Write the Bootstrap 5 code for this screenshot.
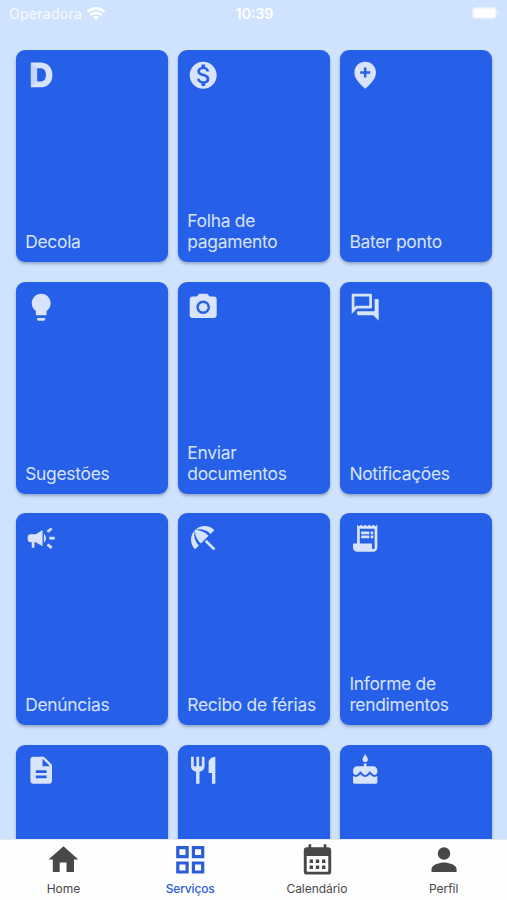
<!DOCTYPE html>
<html lang="pt-BR">
<head>
<meta charset="utf-8">
<meta name="viewport" content="width=device-width, initial-scale=1">
<title>Serviços</title>
<link rel="stylesheet" href="https://cdn.jsdelivr.net/npm/bootstrap@5.3.0/dist/css/bootstrap.min.css">
<style>
body{background:#cfe3fe;font-family:Inter,"Liberation Sans",sans-serif}
.status{height:50px;padding:4px 7px 0 9px;color:#fff;font-size:14px;line-height:20px;flex:none}
.status>div{flex:1 1 0}
.status svg{display:block}
.carrier{letter-spacing:.28px;opacity:.85}
.services{display:grid;grid-template-columns:repeat(3,1fr);grid-auto-rows:212px;gap:19.5px 9.8px;padding:0 15px 0 15.5px;flex:1 1 0;min-height:0;overflow:hidden}
.tile{background:#2660e9;color:#d8e3fd;border:0;border-radius:9px;box-shadow:0 2px 3px rgba(50,70,110,.38);padding:9.3px 9.7px 9px;font-size:17.4px;line-height:20.8px;font-weight:375;letter-spacing:-.27px;text-decoration:none}
.tile svg{width:32.4px;height:32.4px;fill:#d8e3fd;display:block;margin-left:-.4px}
.tabs{height:61px;background:#fefefe;flex:none;border-top:1px solid #e3e7f0}
.tabs a{flex:1 1 0;color:#484848;font-size:12px;line-height:14px;text-decoration:none;padding-top:3px;letter-spacing:-.05px}
.tabs a svg{width:34px;height:34px;fill:#484848;margin-bottom:5px}
.tabs a.current{color:#2b5cd9;font-weight:500;letter-spacing:-.15px}
.tabs a.current svg{fill:none;stroke:#2b5cd9;stroke-width:3.2}
</style>
<script src="https://cdn.jsdelivr.net/npm/bootstrap@5.3.0/dist/js/bootstrap.bundle.min.js"></script>
</head>
<body class="vh-100 d-flex flex-column overflow-hidden">
<header class="status d-flex align-items-start">
  <div class="d-flex align-items-center gap-1"><span class="carrier">Operadora</span>
    <svg width="20" height="16" viewBox="0 0 20 16" fill="none" stroke="#fff" stroke-width="2.6"><path d="M1.6 5.8a12 12 0 0 1 16.8 0M4.6 9a7.8 7.8 0 0 1 10.8 0"/><path d="M10 14.3l-3-3a4.3 4.3 0 0 1 6 0z" fill="#fff" stroke="none"/></svg></div>
  <div class="text-center fw-semibold">10:39</div>
  <div class="d-flex justify-content-end"><svg width="29" height="18" viewBox="0 0 29 18"><rect x="1" y="3" width="25" height="12" rx="4" fill="#fff" opacity=".45"/><rect x="2.5" y="4.5" width="22" height="9" rx="2.5" fill="#fff"/><path d="M27 7v4q1.5-.5 1.5-2T27 7" fill="#fff" opacity=".5"/></svg></div>
</header>
<main class="services">
  <a class="tile d-flex flex-column justify-content-between"><svg viewBox="0 0 24 24"><path fill-rule="evenodd" d="M4.300 2.600h7c5.500 0 9 3.600 9 9.200s-3.500 9.200-9 9.200h-7zM9 6.900v9.800h2.500c2.500 0 4-1.800 4-4.900s-1.500-4.900-4-4.900z"/><path opacity=".1" fill="#2660e9" d="M4.300 2.600L9 6.900v9.800L4.300 21z"/></svg><span>Decola</span></a>
  <a class="tile d-flex flex-column justify-content-between"><svg viewBox="0 0 24 24"><path d="M12 2C6.480 2 2 6.480 2 12s4.480 10 10 10 10-4.480 10-10S17.520 2 12 2zm1.410 16.090V20h-2.670v-1.930c-1.710-.36-3.160-1.460-3.270-3.400h1.960c.1 1.050.82 1.870 2.650 1.870 1.960 0 2.400-.98 2.400-1.590 0-.83-.44-1.610-2.670-2.140-2.480-.6-4.180-1.620-4.180-3.670 0-1.720 1.390-2.840 3.110-3.210V4h2.670v1.950c1.860.45 2.790 1.860 2.850 3.390H14.300c-.05-1.110-.64-1.870-2.220-1.870-1.500 0-2.400.68-2.400 1.640 0 .84.65 1.390 2.670 1.910s4.180 1.390 4.180 3.910c-.01 1.830-1.380 2.830-3.120 3.160z"/></svg><span>Folha de pagamento</span></a>
  <a class="tile d-flex flex-column justify-content-between"><svg viewBox="0 0 24 24"><path fill-rule="evenodd" d="M12 2C7.500 2 4 5.500 4 10c0 5 5 9.400 8 12 3-2.600 8-7 8-12 0-4.500-3.500-8-8-8zm-.9 4.300h1.800v2.800h2.800v1.800h-2.800v2.800h-1.800v-2.800H8.300V9.100h2.800z"/></svg><span>Bater ponto</span></a>
  <a class="tile d-flex flex-column justify-content-between"><svg viewBox="0 0 24 24"><path d="M9 21c0 .55.45 1 1 1h4c.55 0 1-.45 1-1v-1H9v1zm3-19C8.140 2 5 5.140 5 9c0 2.380 1.190 4.470 3 5.740V17c0 .55.45 1 1 1h6c.55 0 1-.45 1-1v-2.260c1.810-1.270 3-3.360 3-5.740 0-3.860-3.140-7-7-7z"/></svg><span>Sugestões</span></a>
  <a class="tile d-flex flex-column justify-content-between"><svg viewBox="0 0 24 24"><path d="M9 2L7.170 4H4c-1.100 0-2 .9-2 2v12c0 1.100.9 2 2 2h16c1.100 0 2-.9 2-2V6c0-1.100-.9-2-2-2h-3.170L15 2H9zm3 15c-2.760 0-5-2.240-5-5s2.240-5 5-5 5 2.240 5 5-2.240 5-5 5z"/><circle cx="12" cy="12" r="3.200"/></svg><span>Enviar documentos</span></a>
  <a class="tile d-flex flex-column justify-content-between"><svg viewBox="0 0 24 24"><path d="M15 4v7H5.170L4 12.170V4h11m1-2H3c-.55 0-1 .45-1 1v14l4-4h10c.55 0 1-.45 1-1V3c0-.55-.45-1-1-1zm5 4h-2v9H6v2c0 .55.45 1 1 1h11l4 4V7c0-.55-.45-1-1-1z"/></svg><span>Notificações</span></a>
  <a class="tile d-flex flex-column justify-content-between"><svg viewBox="0 0 24 24"><path d="M18 11v2h4v-2h-4zm-2 6.610c.96.71 2.210 1.650 3.200 2.390.4-.53.8-1.070 1.200-1.600-.99-.74-2.240-1.680-3.200-2.400-.4.54-.8 1.080-1.200 1.610zM20.400 5.600c-.4-.53-.8-1.070-1.200-1.600-.99.74-2.240 1.680-3.200 2.400.4.53.8 1.070 1.200 1.600.96-.72 2.210-1.650 3.200-2.400zM4 9c-1.100 0-2 .9-2 2v2c0 1.100.9 2 2 2h1v4h2v-4h1l5 3V6L8 9H4zm11.500 3c0-1.330-.58-2.530-1.500-3.350v6.690c.92-.81 1.500-2.010 1.500-3.340z"/></svg><span>Denúncias</span></a>
  <a class="tile d-flex flex-column justify-content-between"><svg viewBox="0 0 24 24"><path d="M13.127 14.560l1.430-1.430 6.440 6.443L19.570 21zm4.293-5.730l2.860-2.860c-3.950-3.950-10.350-3.960-14.300-.02 3.930-1.300 8.310-.25 11.440 2.880zM5.950 5.980c-3.940 3.950-3.930 10.350.02 14.300l2.860-2.860C5.700 14.290 4.650 9.910 5.950 5.980zm.02-.02l-.01.01c-.38 3.010 1.170 6.880 4.300 10.020l5.730-5.730c-3.130-3.130-7.010-4.680-10.020-4.300z"/></svg><span class="text-nowrap">Recibo de férias</span></a>
  <a class="tile d-flex flex-column justify-content-between"><svg viewBox="0 0 24 24"><path d="M19.500 3.200L18 2l-1.500 1.200L15 2l-1.500 1.200L12 2l-1.500 1.200L9 2 7.500 3.200 6 2v14H3v3c0 1.660 1.340 3 3 3h12c1.660 0 3-1.340 3-3V2l-1.500 1.200zM19 19c0 .55-.45 1-1 1s-1-.45-1-1v-3H8V5h11v14z"/><path d="M9 7h6v2H9zm7 0h2v2h-2zm-7 3h6v2H9zm7 0h2v2h-2z"/></svg><span>Informe de rendimentos</span></a>
  <a class="tile d-flex flex-column justify-content-between" aria-label="Documento"><svg viewBox="0 0 24 24"><path d="M14 2H6c-1.100 0-1.990.9-1.990 2L4 20c0 1.100.89 2 1.990 2H18c1.100 0 2-.9 2-2V8l-6-6zm2 16H8v-2h8v2zm0-4H8v-2h8v2zm-3-5V3.500L18.500 9H13z"/></svg></a>
  <a class="tile d-flex flex-column justify-content-between" aria-label="Restaurante"><svg viewBox="0 0 24 24"><path d="M11 9H9V2H7v7H5V2H3v7c0 2.120 1.660 3.840 3.750 3.970V22h2.500v-9.030C11.340 12.840 13 11.120 13 9V2h-2v7zm5-3v8h2.500v8H21V2c-2.760 0-5 2.240-5 4z"/></svg></a>
  <a class="tile d-flex flex-column justify-content-between" aria-label="Aniversário"><svg viewBox="0 0 24 24"><path d="M12 6c1.110 0 2-.9 2-2 0-.38-.1-.73-.29-1.030L12 0l-1.710 2.970c-.19.3-.29.65-.29 1.030 0 1.100.9 2 2 2zm4.600 9.990l-1.070-1.070-1.080 1.070c-1.300 1.300-3.580 1.310-4.890 0l-1.070-1.070-1.090 1.070C6.750 16.640 5.880 17 4.960 17c-.73 0-1.400-.23-1.960-.61V21c0 .55.45 1 1 1h16c.55 0 1-.45 1-1v-4.610c-.56.38-1.230.61-1.960.61-.92 0-1.790-.36-2.440-1.010zM18 9h-5V7h-2v2H6c-1.660 0-3 1.340-3 3v1.540c0 1.080.88 1.960 1.960 1.960.52 0 1.020-.2 1.380-.57l2.140-2.130 2.130 2.130c.74.74 2.030.74 2.770 0l2.140-2.130 2.130 2.130c.37.37.86.57 1.380.57 1.080 0 1.960-.88 1.960-1.960V12C21 10.340 19.660 9 18 9z"/></svg></a>
</main>
<nav class="tabs d-flex">
  <a class="d-flex flex-column align-items-center"><svg viewBox="0 0 34 34"><path d="M17.500 3.300L32.300 16.500H28V29h-7.500v-9.500h-6.800V29H6.800V16.500H2.500z"/></svg>Home</a>
  <a class="current d-flex flex-column align-items-center"><svg viewBox="0 0 34 34"><path d="M4.800 4.600h9.300v9H4.800zM20.400 4.600h9.300v9h-9.300zM4.800 20h9.300v9H4.800zM20.400 20h9.300v9h-9.300z"/></svg>Serviços</a>
  <a class="d-flex flex-column align-items-center"><svg viewBox="0 0 34 34"><path fill-rule="evenodd" d="M8.500 1.200h2.700v3h12.500v-3h2.700v3h1.600a3.200 3.200 0 0 1 3.200 3.200v21a3.200 3.200 0 0 1-3.200 3.200H7a3.200 3.200 0 0 1-3.200-3.200v-21A3.200 3.200 0 0 1 7 4.200h1.500zM6.700 13v14.800q0 1 1 1h19.600q1 0 1-1V13z"/><path d="M9.600 16.500H13v3.400H9.600zm6.200 0h3.400v3.400h-3.400zm6.200 0h3.400v3.400H22zM9.600 22.600H13V26H9.600zm6.200 0h3.400V26h-3.400zm6.200 0h3.400V26H22z"/></svg>Calendário</a>
  <a class="d-flex flex-column align-items-center"><svg viewBox="0 0 34 34"><circle cx="17" cy="10.500" r="6.200"/><path d="M4.500 29v-3.200c0-4.200 8.300-6.400 12.500-6.400s12.600 2.200 12.600 6.400V29z"/></svg>Perfil</a>
</nav>
</body>
</html>
